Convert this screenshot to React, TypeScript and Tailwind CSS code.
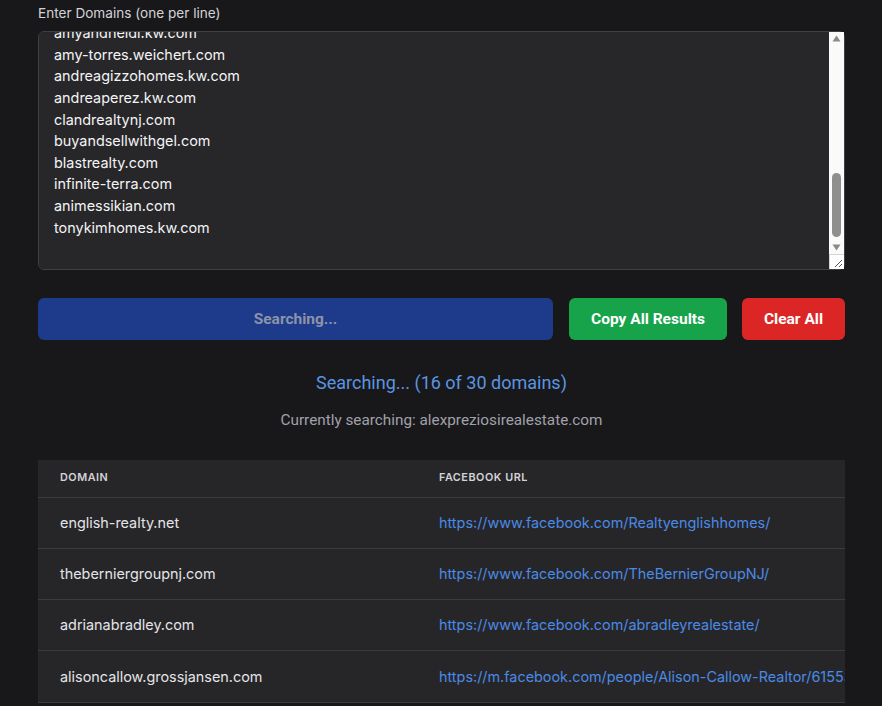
import { useEffect, useRef } from 'react';

const domains = [
  'english-realty.net',
  'theberniergroupnj.com',
  'adrianabradley.com',
  'alisoncallow.grossjansen.com',
  'kellysellsnj.com',
  'thehomesteadgroup.com',
  'jerseyshorehomes.net',
  'mariasantosrealty.com',
  'bhhsnjproperties.com',
  'danielleteam.kw.com',
  'coastalnjrealty.com',
  'gardenstatehomes.com',
  'rebeccalhomes.com',
  'homesbyjoanne.com',
  'alexpreziosirealestate.com',
  'marcusgreenrealty.com',
  'trustedrealtynj.com',
  'lindabrownteam.com',
  'njluxuryliving.com',
  'amyandheidi.kw.com',
  'amy-torres.weichert.com',
  'andreagizzohomes.kw.com',
  'andreaperez.kw.com',
  'clandrealtynj.com',
  'buyandsellwithgel.com',
  'blastrealty.com',
  'infinite-terra.com',
  'animessikian.com',
  'tonykimhomes.kw.com',
];

const results = [
  { domain: 'english-realty.net', url: 'https://www.facebook.com/Realtyenglishhomes/' },
  { domain: 'theberniergroupnj.com', url: 'https://www.facebook.com/TheBernierGroupNJ/' },
  { domain: 'adrianabradley.com', url: 'https://www.facebook.com/abradleyrealestate/' },
  {
    domain: 'alisoncallow.grossjansen.com',
    url: 'https://m.facebook.com/people/Alison-Callow-Realtor/61553092877615/',
  },
];

// classic light scrollbar, drawn over the textarea's right edge
function FakeScrollbar() {
  return (
    <div className="pointer-events-none absolute right-[1px] top-[1px] bottom-[1px] flex w-[15px] flex-col bg-[#fafafa]">
      <div className="flex h-[14px] items-center justify-center">
        <svg width="9" height="7" viewBox="0 0 9 7">
          <path d="M4.5 0.5 L8.5 6.5 L0.5 6.5 Z" fill="#8a8a8a" />
        </svg>
      </div>
      <div className="flex flex-1 flex-col px-[3px] pt-[127px] pb-[4px]">
        <div className="h-[64px] rounded-full bg-[#8f8f8f]" />
      </div>
      <div className="flex h-[14px] items-center justify-center">
        <svg width="9" height="7" viewBox="0 0 9 7">
          <path d="M0.5 0.5 L8.5 0.5 L4.5 6.5 Z" fill="#8a8a8a" />
        </svg>
      </div>
      <div className="relative h-[15px] border-t border-l border-[#d4d4d4] bg-white">
        <svg className="absolute right-[1px] bottom-[1px]" width="10" height="10" viewBox="0 0 10 10">
          <path d="M9 2 L2 9 M9 6 L6 9" stroke="#555" strokeWidth="1" />
        </svg>
      </div>
    </div>
  );
}

export default function App() {
  const areaRef = useRef<HTMLTextAreaElement>(null);

  useEffect(() => {
    const el = areaRef.current;
    if (el) el.scrollTop = el.scrollHeight;
  }, []);

  return (
    <div className="h-[706px] overflow-hidden bg-[#18181b] pl-[38px] pr-[37px] pt-[4px] font-['Inter',sans-serif]">
      <label className="block text-[13.6px] leading-[18px] text-[#d4d4d8]">Enter Domains (one per line)</label>
      <div className="relative mt-[9px]">
        <textarea
          ref={areaRef}
          readOnly
          defaultValue={domains.join('\n') + '\n'}
          className="block h-[239px] w-full resize-none overflow-y-scroll rounded-md border border-[#3f3f46] bg-[#27272a] pl-[15px] pr-[30px] pt-[12px] pb-[9px] text-[14.4px] leading-[21.6px] text-[#f4f4f5] outline-none [scrollbar-width:none] font-['Inter',sans-serif]"
        />
        <FakeScrollbar />
      </div>

      <div className="mt-[28px] flex gap-[15px] font-['Roboto',sans-serif]">
        <button className="mr-[1px] h-[42px] flex-1 rounded-md bg-[#1e3a8a] pt-[2px] text-[15.5px] font-bold text-[#8b94a8]">
          Searching...
        </button>
        <button className="h-[42px] rounded-md bg-[#16a34a] px-[22px] pt-[2px] text-[15.5px] font-bold text-white">
          Copy All Results
        </button>
        <button className="h-[42px] rounded-md bg-[#dc2626] px-[22px] pt-[2px] text-[15.5px] font-bold text-white">
          Clear All
        </button>
      </div>

      <div className="mt-[31px] text-center font-['Roboto',sans-serif]">
        <p className="text-[18px] leading-[24px] text-[#5b95e0]">Searching... (16 of 30 domains)</p>
        <p className="mt-[15px] text-[15.3px] leading-[20px] text-[#a1a1aa]">
          Currently searching: alexpreziosirealestate.com
        </p>
      </div>

      <div className="mt-[30px] overflow-hidden bg-[#262629]">
        <table className="w-max min-w-full border-collapse text-left">
          <thead>
            <tr className="border-b border-[#3a3a3f]">
              <th className="h-[37px] w-[379px] pl-[22px] text-[10.8px] font-semibold uppercase tracking-wider text-[#d4d4d8]">
                Domain
              </th>
              <th className="h-[37px] pl-[22px] text-[10.8px] font-semibold uppercase tracking-wider text-[#d4d4d8]">
                Facebook URL
              </th>
            </tr>
          </thead>
          <tbody>
            {results.map((r) => (
              <tr key={r.domain} className="border-b border-[#3a3a3f]">
                <td className="h-[51.3px] pl-[22px] text-[14.4px] text-[#e4e4e7]">{r.domain}</td>
                <td className="h-[51.3px] pl-[22px] pr-6 text-[14.4px] text-[#4b8ae6]">{r.url}</td>
              </tr>
            ))}
          </tbody>
        </table>
      </div>
    </div>
  );
}
